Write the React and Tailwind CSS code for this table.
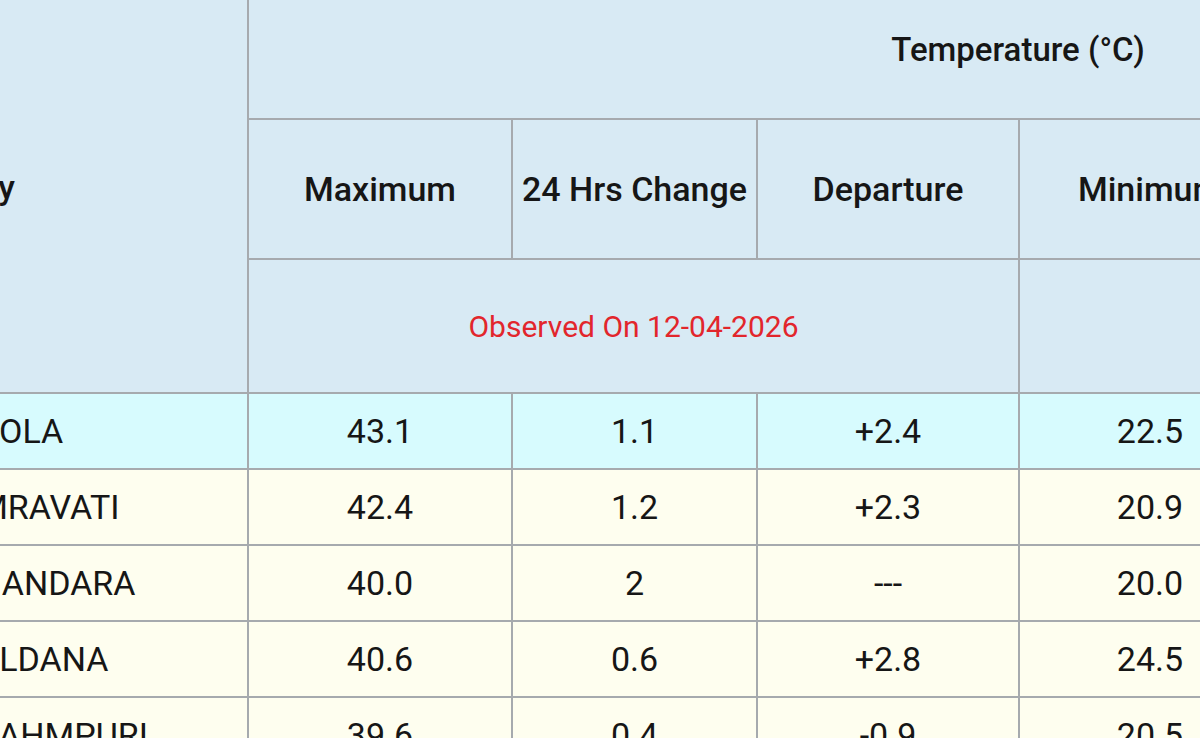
const rows = [
  { city: "AKOLA", max: "43.1", ch: "1.1", dep: "+2.4", min: "22.5", mch: "0.8", mdep: "+0.6", hot: true },
  { city: "AMRAVATI", max: "42.4", ch: "1.2", dep: "+2.3", min: "20.9", mch: "1.4", mdep: "-0.8" },
  { city: "BHANDARA", max: "40.0", ch: "2", dep: "---", min: "20.0", mch: "0.5", mdep: "---" },
  { city: "BULDANA", max: "40.6", ch: "0.6", dep: "+2.8", min: "24.5", mch: "1.0", mdep: "+2.1" },
  { city: "BRAHMPURI", max: "39.6", ch: "0.4", dep: "-0.9", min: "20.5", mch: "0.2", mdep: "-1.1" },
];

const cell = "border-2 border-[#a6aaae]";

const App = () => {
  return (
    <div className="w-[1200px] h-[738px] overflow-hidden bg-[#fefeef] font-['Roboto',sans-serif] text-[#161616]">
      <table className="-ml-[60px] -mt-[20px] border-collapse table-fixed w-[1847px]">
        <colgroup>
          <col className="w-[307px]" />
          <col className="w-[264px]" />
          <col className="w-[245px]" />
          <col className="w-[262px]" />
          <col className="w-[262px]" />
          <col className="w-[245px]" />
          <col className="w-[262px]" />
        </colgroup>

        {/* Header */}
        <thead className="bg-[#d8eaf4]">
          <tr className="h-[138px]">
            <th rowSpan={3} className={`${cell} text-left pl-[14px] text-[34px] font-medium`}>
              City
            </th>
            <th colSpan={6} className={`${cell} text-[33px] font-medium`}>
              Temperature (°C)
            </th>
          </tr>
          <tr className="h-[140px]">
            <th className={`${cell} text-[34px] font-medium`}>Maximum</th>
            <th className={`${cell} text-[34px] font-medium whitespace-nowrap`}>24 Hrs Change</th>
            <th className={`${cell} text-[34px] font-medium`}>Departure</th>
            <th className={`${cell} text-[34px] font-medium`}>Minimum</th>
            <th className={`${cell} text-[34px] font-medium whitespace-nowrap`}>24 Hrs Change</th>
            <th className={`${cell} text-[34px] font-medium`}>Departure</th>
          </tr>
          <tr className="h-[134px]">
            <td colSpan={3} className={`${cell} text-center text-[30px] text-[#e2262c]`}>
              Observed On 12-04-2026
            </td>
            <td colSpan={3} className={`${cell} text-center text-[30px] text-[#e2262c]`}>
              Observed On 13-04-2026
            </td>
          </tr>
        </thead>

        {/* Stations */}
        <tbody className="text-[34px]">
          {rows.map((r) => (
            <tr key={r.city} className={`h-[76px] ${r.hot ? "bg-[#d7fbfe]" : "bg-[#fefeef]"}`}>
              <td className={`${cell} text-left pl-[14px] whitespace-nowrap`}>{r.city}</td>
              <td className={`${cell} text-center`}>{r.max}</td>
              <td className={`${cell} text-center`}>{r.ch}</td>
              <td className={`${cell} text-center`}>{r.dep}</td>
              <td className={`${cell} text-center`}>{r.min}</td>
              <td className={`${cell} text-center`}>{r.mch}</td>
              <td className={`${cell} text-center`}>{r.mdep}</td>
            </tr>
          ))}
        </tbody>
      </table>
    </div>
  );
};

export default App;
